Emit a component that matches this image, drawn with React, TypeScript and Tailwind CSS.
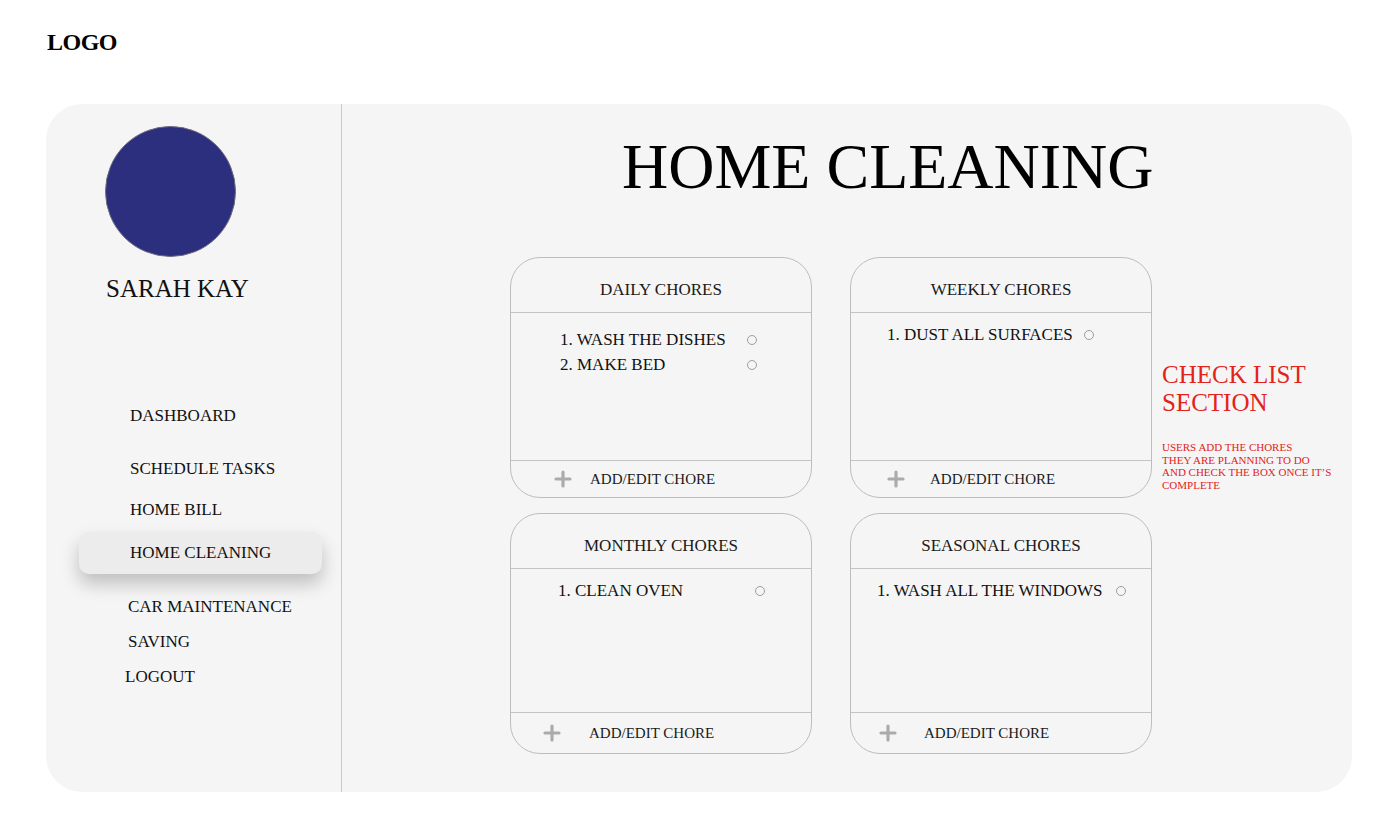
import { Plus } from "lucide-react";

const serif = "font-['Liberation_Serif','Times_New_Roman',serif]";

interface ChoreCardProps {
  title: string;
  items: string[];
  padLeft: number;
  textWidth: number;
  firstGap: number;
  plusLeft: number;
  labelGap: number;
  bodyHeight: number;
}

function ChoreCard(props: ChoreCardProps) {
  return (
    <div className="flex h-[241px] w-[302px] flex-col rounded-[30px] border border-[#bdbdbd]">
      <div className="flex h-[55px] shrink-0 items-center justify-center border-b border-[#c4c4c4] pt-[10px] text-[17px] text-[#1a1a1a]">
        {props.title}
      </div>
      <div
        className="flex shrink-0 flex-col gap-[4px] text-[17px] text-[#111]"
        style={{ height: props.bodyHeight, paddingLeft: props.padLeft, paddingTop: props.firstGap }}
      >
        {props.items.map((item) => (
          <div key={item} className="flex h-[21px] items-center">
            <span style={{ width: props.textWidth }}>{item}</span>
            <span className="h-[10px] w-[10px] rounded-full border border-[#9e9e9e]" />
          </div>
        ))}
      </div>
      <div className="flex flex-1 items-center border-t border-[#c4c4c4]">
        <Plus
          aria-hidden="true"
          size={24}
          strokeWidth={3.2}
          className="text-[#ababab]"
          style={{ marginLeft: props.plusLeft }}
        />
        <span className="text-[15px] text-[#1a1a1a]" style={{ marginLeft: props.labelGap }}>
          ADD/EDIT CHORE
        </span>
      </div>
    </div>
  );
}

const topNav = [
  { label: "DASHBOARD", h: "h-[53px]" },
  { label: "SCHEDULE TASKS", h: "h-[41px]" },
  { label: "HOME BILL", h: "h-[35px]" },
];

const bottomNav = [
  { label: "CAR MAINTENANCE", pl: "pl-[82px]" },
  { label: "SAVING", pl: "pl-[82px]" },
  { label: "LOGOUT", pl: "pl-[79px]" },
];

export default function App() {
  return (
    <div className={`min-h-[834px] w-[1394px] bg-white ${serif}`}>
      <div className="px-[47px] pt-[30px] text-[24px] font-bold leading-none tracking-[-0.5px] text-black">
        LOGO
      </div>

      <div className="ml-[46px] mt-[50px] flex h-[688px] w-[1306px] overflow-hidden rounded-[36px] bg-[#f5f5f5]">
        {/* sidebar */}
        <aside className="flex w-[296px] shrink-0 flex-col border-r border-[#c8c8c8]">
          <div className="ml-[59px] mt-[22px] h-[131px] w-[131px] rounded-full border border-[#6b6b80] bg-[#2c2e7e]" />
          <p className="ml-[60px] mt-[19px] text-[25px] leading-none text-[#111]">SARAH KAY</p>

          <nav className="mt-[102px] flex flex-col text-[17px] text-[#111]">
            {topNav.map((item) => (
              <div key={item.label} className={`flex items-start pl-[84px] ${item.h}`}>
                {item.label}
              </div>
            ))}
            <div className="ml-[33px] flex h-[42px] w-[243px] items-center rounded-[10px] bg-[#ececec] pl-[51px] shadow-[0_10px_18px_rgba(0,0,0,0.22)]">
              HOME CLEANING
            </div>
            <div className="mt-[20px] flex flex-col">
              {bottomNav.map((item) => (
                <div key={item.label} className={`flex h-[35px] items-start ${item.pl}`}>
                  {item.label}
                </div>
              ))}
            </div>
          </nav>
        </aside>

        {/* content */}
        <main className="flex flex-1 flex-col">
          <h1 className="pl-[280px] pt-[31px] text-[64px] leading-none text-black">HOME CLEANING</h1>

          <div className="mt-[58px] flex pl-[168px]">
            <div className="grid grid-cols-[302px_302px] gap-x-[38px] gap-y-[15px]">
              <ChoreCard
                title="DAILY CHORES"
                items={["1. WASH THE DISHES", "2. MAKE BED"]}
                padLeft={49}
                textWidth={187}
                firstGap={16}
                plusLeft={40}
                labelGap={15}
                bodyHeight={147}
              />
              <ChoreCard
                title="WEEKLY CHORES"
                items={["1. DUST ALL SURFACES"]}
                padLeft={36}
                textWidth={197}
                firstGap={11}
                plusLeft={33}
                labelGap={22}
                bodyHeight={147}
              />
              <ChoreCard
                title="MONTHLY CHORES"
                items={["1. CLEAN OVEN"]}
                padLeft={47}
                textWidth={197}
                firstGap={11}
                plusLeft={29}
                labelGap={25}
                bodyHeight={143}
              />
              <ChoreCard
                title="SEASONAL CHORES"
                items={["1. WASH ALL THE WINDOWS"]}
                padLeft={26}
                textWidth={239}
                firstGap={11}
                plusLeft={25}
                labelGap={24}
                bodyHeight={143}
              />
            </div>

            <div className="ml-[10px] pt-[104px] text-[#e3231a]">
              <p className="text-[25px] leading-[28px]">
                CHECK LIST
                <br />
                SECTION
              </p>
              <p className="mt-[24px] w-[185px] text-[11px] leading-[12.7px]">
                USERS ADD THE CHORES
                <br />
                THEY ARE PLANNING TO DO
                <br />
                AND CHECK THE BOX ONCE IT’S
                <br />
                COMPLETE
              </p>
            </div>
          </div>
        </main>
      </div>
    </div>
  );
}
